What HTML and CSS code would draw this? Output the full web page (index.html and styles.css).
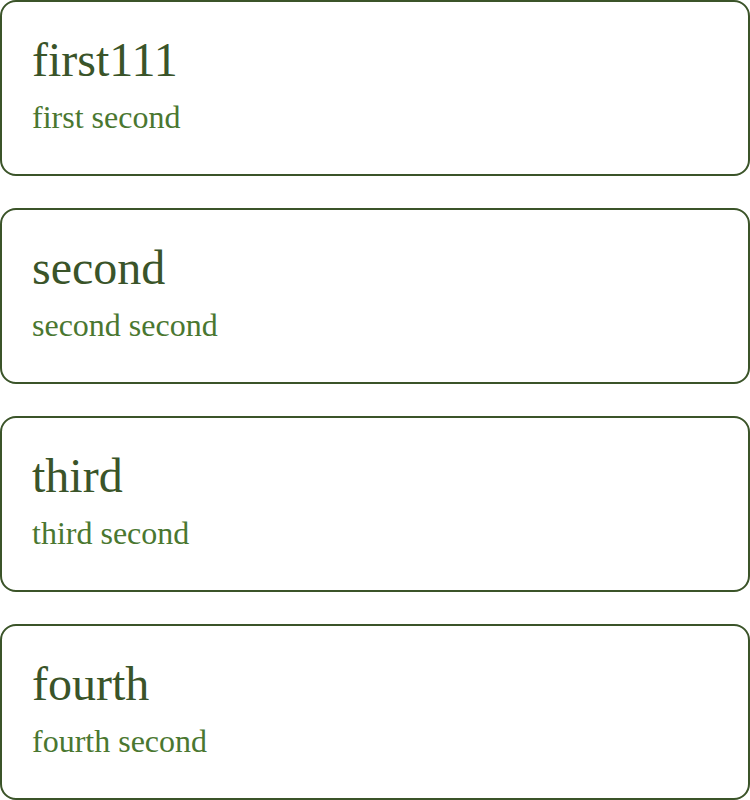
FILE: index.html
```html
<!DOCTYPE html>
<html lang="en">
<head>
    <meta charset="UTF-8">
    <meta name="viewport" content="width=device-width, initial-scale=1.0">
    <title>Cards</title>
    <link rel="stylesheet" href="styles.css">
</head>
<body>
    <div class="card-list">
        <div class="card">
            <div class="card-title">first111</div>
            <div class="card-subtitle">first second</div>
        </div>
        <div class="card">
            <div class="card-title">second</div>
            <div class="card-subtitle">second second</div>
        </div>
        <div class="card">
            <div class="card-title">third</div>
            <div class="card-subtitle">third second</div>
        </div>
        <div class="card">
            <div class="card-title">fourth</div>
            <div class="card-subtitle">fourth second</div>
        </div>
    </div>
</body>
</html>
```

FILE: styles.css
```css
body {
    margin: 0;
    font-family: "Liberation Serif", "Times New Roman", serif;
    background-color: #fff;
}

.card-list {
    display: flex;
    flex-direction: column;
    gap: 32px;
}

.card {
    height: 176px;
    box-sizing: border-box;
    border: 2px solid #3b5429;
    border-radius: 16px;
    padding: 31px 30px 0 30px;
}

.card-title {
    font-size: 48px;
    color: #3a5429;
    line-height: 53px;
}

.card-subtitle {
    margin-top: 13px;
    font-size: 32px;
    color: #4a7730;
    line-height: 36px;
}
```
